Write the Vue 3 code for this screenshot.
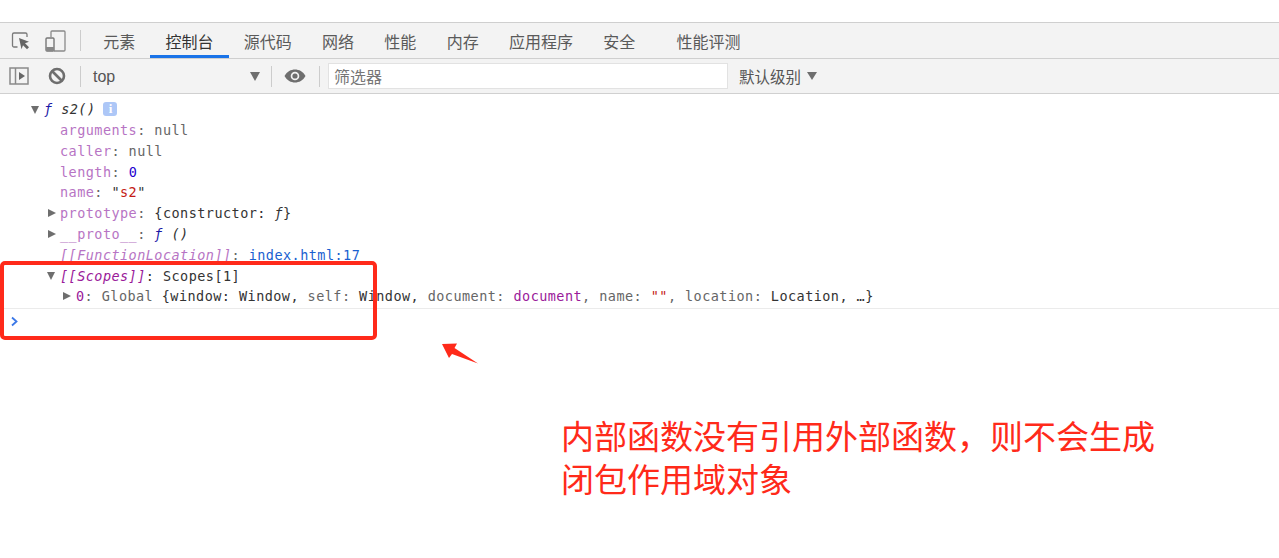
<script setup>
const tabs = ['元素', '控制台', '源代码', '网络', '性能', '内存', '应用程序', '安全', '性能评测']
</script>

<template>
  <div class="page">
    <div class="topgap"></div>
    <div class="tabbar">
      <svg class="ic-inspect" width="20" height="20" viewBox="0 0 20 20">
        <path d="M6.500 16H3a1.500 1.500 0 0 1-1.500-1.500V3.500A1.500 1.500 0 0 1 3 2h11.500A1.500 1.500 0 0 1 16 3.500V6" fill="none" stroke="#7a7a7a" stroke-width="1.300"/>
        <path d="M8 7l10 3.800-4 1.500 4 4-2 2-4-4-1.500 4z" fill="#666"/>
      </svg>
      <svg class="ic-device" width="21" height="22" viewBox="0 0 21 22">
        <path d="M6 7V2A1 1 0 0 1 7 1h12a1 1 0 0 1 1 1v18a1 1 0 0 1-1 1H9" fill="none" stroke="#8a8a8a" stroke-width="1.300"/>
        <rect x="1" y="8" width="8" height="13" rx="1" fill="none" stroke="#777" stroke-width="1.400"/>
        <rect x="1" y="17" width="8" height="4" fill="#888"/>
      </svg>
      <span class="sep sep-tab"></span>
      <div class="tabs">
        <span v-for="(t, i) in tabs" :key="t" class="tab" :class="{ active: i === 1, last: i === 8 }">{{ t }}</span>
      </div>
    </div>
    <div class="toolbar">
      <svg class="ic-side" width="20" height="18" viewBox="0 0 20 18">
        <rect x="1" y="1" width="18" height="16" fill="none" stroke="#8a8a8a" stroke-width="1.500"/>
        <path d="M6.500 1v16" stroke="#8a8a8a" stroke-width="1.500"/>
        <path d="M10 5l6 4-6 4z" fill="#666"/>
      </svg>
      <svg class="ic-clear" width="18" height="18" viewBox="0 0 18 18">
        <circle cx="9" cy="9" r="7" fill="none" stroke="#6e6e6e" stroke-width="2.600"/>
        <path d="M4 4l10 10" stroke="#6e6e6e" stroke-width="2.600"/>
      </svg>
      <span class="sep sep-a"></span>
      <span class="ctx">top</span>
      <span class="tri tri-ctx"></span>
      <span class="sep sep-b"></span>
      <svg class="ic-eye" width="22" height="14" viewBox="0 0 22 14">
        <path d="M0.500 7C3 2.500 7 0.500 11 0.500S19 2.500 21.500 7C19 11.500 15 13.500 11 13.500S3 11.500 0.500 7z" fill="#6e6e6e"/>
        <circle cx="11" cy="7" r="4.300" fill="#f3f3f3"/>
        <circle cx="11" cy="7" r="2.600" fill="#6e6e6e"/>
      </svg>
      <span class="sep sep-c"></span>
      <div class="filter">筛选器</div>
      <span class="level">默认级别</span>
      <span class="tri tri-level"></span>
    </div>
    <div class="console">
      <div class="row r0"><span class="arrow down"></span><i class="fn">ƒ</i><i class="sig"> s2()</i><span class="info">i</span></div>
      <div class="row r1"><span class="pk">arguments</span><span class="g">: null</span></div>
      <div class="row r1"><span class="pk">caller</span><span class="g">: null</span></div>
      <div class="row r1"><span class="pk">length</span><span class="g">: </span><span class="num">0</span></div>
      <div class="row r1"><span class="pk">name</span><span class="g">: </span><span class="k">"</span><span class="str">s2</span><span class="k">"</span></div>
      <div class="row r1"><span class="arrow right"></span><span class="pk">prototype</span><span class="g">: </span><span class="k">{constructor: </span><i class="k">ƒ</i><span class="k">}</span></div>
      <div class="row r1"><span class="arrow right"></span><span class="pk">__proto__</span><span class="g">: </span><i class="fn">ƒ</i><i class="sig"> ()</i></div>
      <div class="row r1"><i class="pk">[[FunctionLocation]]</i><span class="g">: </span><span class="link">index.html:17</span></div>
      <div class="row r1 scopes"><span class="arrow down"></span><i class="pd">[[Scopes]]</i><span class="k">: Scopes[1]</span></div>
      <div class="row r2 lastrow"><span class="arrow right"></span><span class="pd">0</span><span class="g">: Global </span><span class="k">{window: Window, </span><span class="g">self: </span><span class="k">Window, </span><span class="g">document: </span><span class="pd">document</span><span class="g">, name: </span><span class="str">""</span><span class="g">, location: </span><span class="k">Location, …}</span></div>
      <div class="prompt">
        <svg width="9" height="11" viewBox="0 0 9 11"><path d="M2 1.500l4.500 4-4.500 4" fill="none" stroke="#3b78e7" stroke-width="1.800"/></svg>
      </div>
    </div>

    <div class="redbox"></div>
    <svg class="redarrow" width="38" height="24" viewBox="0 0 38 24">
      <path d="M0 2L15 1.500 12.500 6 36 21.500 10 12 7 16z" fill="#ff2a1a"/>
    </svg>
    <div class="note">内部函数没有引用外部函数，则不会生成<br>闭包作用域对象</div>
  </div>
</template>

<style scoped>
.page {
  position: relative;
  width: 1279px;
  height: 558px;
  background: #fff;
  overflow: hidden;
  font-family: "Noto Sans CJK SC", "Liberation Sans", sans-serif;
}
.topgap { height: 22px; }
.tabbar {
  height: 35px;
  background: #f3f3f3;
  border-top: 1px solid #cfcfcf;
  border-bottom: 1px solid #cfcfcf;
  display: flex;
  align-items: center;
}
.ic-inspect { margin-left: 11px; }
.ic-device { margin-left: 14px; }
.sep { width: 1px; height: 21px; background: #ccc; flex: none; }
.sep-tab { margin-left: 14px; }
.tabs { display: flex; margin-left: 7px; height: 100%; }
.tab {
  padding: 1px 15.150px 0;
  font-size: 16px;
  line-height: 34px;
  height: 35px;
  box-sizing: border-box;
  color: #5a5a5a;
  white-space: nowrap;
}
.tab.active {
  color: #333;
  border-bottom: 3px solid #1a73e8;
}
.tab.last { margin-left: 11px; }
.toolbar {
  height: 34px;
  background: #f3f3f3;
  border-bottom: 1px solid #d0d0d0;
  display: flex;
  align-items: center;
}
.ic-side { margin-left: 9px; }
.ic-clear { margin-left: 19px; }
.sep-a { margin-left: 14px; }
.ctx {
  margin-left: 12px;
  padding-top: 2px;
  width: 157px;
  font-size: 16px;
  color: #555;
  font-family: "Liberation Sans", sans-serif;
}
.tri {
  width: 0;
  height: 0;
  border-left: 5px solid transparent;
  border-right: 5px solid transparent;
  border-top: 9px solid #6e6e6e;
}
.sep-b { margin-left: 11px; }
.ic-eye { margin-left: 12px; }
.sep-c { margin-left: 13px; }
.filter {
  margin-left: 8px;
  width: 400px;
  height: 26px;
  box-sizing: border-box;
  background: #fff;
  border: 1px solid #e2e2e2;
  padding-left: 5px;
  font-size: 16px;
  line-height: 25px;
  color: #777;
}
.level {
  margin-left: 11px;
  font-size: 15.500px;
  color: #555;
  white-space: nowrap;
}
.tri-level { margin-left: 6px; border-top-width: 8px; }
.console {
  padding-top: 5px;
  font-family: "DejaVu Sans Mono", monospace;
  font-size: 13.500px;
  letter-spacing: 0.45px;
  color: #333;
}
.row {
  position: relative;
  height: 20.760px;
  line-height: 20.760px;
  white-space: pre;
}
.r0 { padding-left: 44px; height: 21.200px; }
.r1 { padding-left: 60px; }
.r2 { padding-left: 76px; }
.scopes { line-height: 22.800px; }
.lastrow { height: 22.720px; border-bottom: 1px solid #ebebeb; box-sizing: border-box; }
.arrow { position: absolute; width: 0; height: 0; }
.arrow.down {
  margin-left: -13px;
  top: 7px;
  border-left: 4.500px solid transparent;
  border-right: 4.500px solid transparent;
  border-top: 8px solid #6e6e6e;
}
.r0 .arrow.down { left: 44px; margin-left: -13px; }
.r1 .arrow.down { left: 60px; }
.arrow.right {
  margin-left: -12px;
  top: 6px;
  border-top: 4.500px solid transparent;
  border-bottom: 4.500px solid transparent;
  border-left: 8px solid #6e6e6e;
}
.r1 .arrow.right { left: 60px; }
.r2 .arrow.right { left: 76px; margin-left: -13px; }
.fn { color: #1a1aa6; }
.sig { color: #333; }
.info {
  display: inline-block;
  width: 14px;
  height: 14px;
  margin-left: 8px;
  border-radius: 3px;
  background: #adc7f7;
  color: #fff;
  font-family: "Liberation Serif", serif;
  font-weight: 700;
  font-size: 13px;
  line-height: 14px;
  letter-spacing: 0;
  text-align: center;
  vertical-align: 1px;
}
.pk { color: #b774c4; }
.pd { color: #9a1a9a; }
.g { color: #666; }
.k { color: #333; }
.num { color: #1c00cf; }
.str { color: #c41a16; }
.link { color: #1a5fd0; }
.prompt { padding: 7px 0 0 10px; line-height: 0; }
.redbox {
  position: absolute;
  left: 0;
  top: 261px;
  width: 377px;
  height: 79px;
  box-sizing: border-box;
  border: 4px solid #ff2a1a;
  border-radius: 5px;
}
.redarrow { position: absolute; left: 442px; top: 342px; }
.note {
  position: absolute;
  left: 561px;
  top: 414px;
  font-size: 33px;
  line-height: 43px;
  color: #ff2a1a;
  white-space: nowrap;
}
</style>
